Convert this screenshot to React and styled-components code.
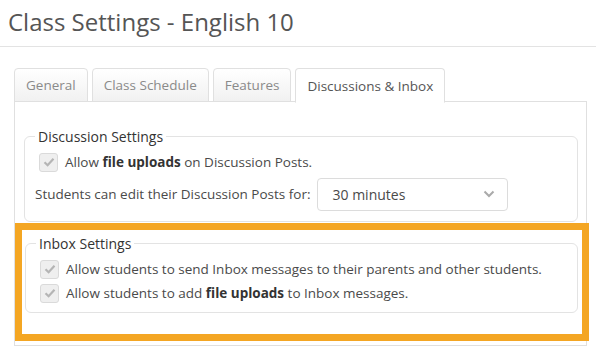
import React from 'react';
import styled, { createGlobalStyle } from 'styled-components';

const GlobalStyle = createGlobalStyle`
  body {
    margin: 0;
    background: #fff;
    font-family: "Open Sans", "Liberation Sans", sans-serif;
    color: #444;
  }
`;

// Page header with the class name
const Header = styled.div`
  height: 46px;
  padding: 0 8px;
  border-bottom: 1px solid #e3e3e3;
  display: flex;
  align-items: center;
`;

const Title = styled.h1`
  margin: 0 0 4px;
  font-size: 24px;
  font-weight: 400;
  color: #555;
`;

const Body = styled.div`
  padding: 21px 9px 0 14px;
`;

// Tab strip
const Tabs = styled.div`
  display: flex;
  gap: 4px;
  height: 34px;
  position: relative;
  z-index: 1;
`;

const Tab = styled.div`
  display: flex;
  align-items: center;
  padding: 0 11px;
  font-size: 13.5px;
  color: ${(p) => (p.active ? '#555' : '#8a8a8a')};
  border: 1px solid #e0e0e0;
  border-bottom: ${(p) => (p.active ? '1px solid #fff' : '1px solid #e0e0e0')};
  border-radius: 4px 4px 0 0;
  background: ${(p) => (p.active ? '#fff' : 'linear-gradient(#fff, #f1f1f1)')};
  height: ${(p) => (p.active ? '35px' : '34px')};
  box-sizing: border-box;
`;

// Tab content panel
const Panel = styled.div`
  margin-top: -1px;
  border: 1px solid #e0e0e0;
  padding: 25px 8px 4px 9px;
  width: 573px;
  box-sizing: border-box;
`;

const Fieldset = styled.fieldset`
  margin: 0;
  padding: 4px 10px 7px 10px;
  border: 1px solid #e3e3e3;
  border-radius: 6px;
  min-width: 0;
`;

const Legend = styled.legend`
  padding: 0 3px;
  font-size: 14px;
  color: #333;
`;

const Row = styled.label`
  display: flex;
  align-items: center;
  gap: 7px;
  height: ${(p) => p.h || 24}px;
  font-size: 13.5px;
  color: #4a4a4a;
  white-space: nowrap;

  b {
    font-weight: 700;
    color: #333;
  }
`;

const Box = styled.span`
  width: 19px;
  height: 19px;
  box-sizing: border-box;
  border: 1px solid #dadada;
  border-radius: 3px;
  background: #efefef;
  display: flex;
  align-items: center;
  justify-content: center;
  margin-left: 4px;
  flex-shrink: 0;
`;

const Select = styled.div`
  width: 191px;
  height: 33px;
  box-sizing: border-box;
  border: 1px solid #dcdcdc;
  border-radius: 4px;
  margin-left: -1px;
  display: flex;
  align-items: center;
  justify-content: space-between;
  padding: 0 12px 0 15px;
  font-size: 14px;
  color: #4a4a4a;
`;

// Orange annotation frame around the inbox settings
const Highlight = styled.div`
  margin: 1px -11px 0 -9px;
  border: 7px solid #f4a623;
  padding: 4px 4px 21px 3px;
`;

const Check = () => (
  <Box>
    <svg width="12" height="10" viewBox="0 0 12 10">
      <path d="M1.5 5.2 L4.6 8.2 L10.5 1.8" fill="none" stroke="#b5b5b5" strokeWidth="2.2" />
    </svg>
  </Box>
);

const Chevron = () => (
  <svg width="12" height="8" viewBox="0 0 12 8">
    <path d="M1.5 1.5 L6 6 L10.5 1.5" fill="none" stroke="#aaa" strokeWidth="2" />
  </svg>
);

const App = () => (
  <>
    <GlobalStyle />
    <Header>
      <Title>Class Settings - English 10</Title>
    </Header>
    <Body>
      <Tabs>
        <Tab>General</Tab>
        <Tab>Class Schedule</Tab>
        <Tab>Features</Tab>
        <Tab active>Discussions &amp; Inbox</Tab>
      </Tabs>
      <Panel>
        <Fieldset>
          <Legend>Discussion Settings</Legend>
          <Row h={24}>
            <Check />
            <span>Allow <b>file uploads</b> on Discussion Posts.</span>
          </Row>
          <Row h={40}>
            <span>Students can edit their Discussion Posts for:</span>
            <Select>
              <span>30 minutes</span>
              <Chevron />
            </Select>
          </Row>
        </Fieldset>
        <Highlight>
          <Fieldset>
            <Legend>Inbox Settings</Legend>
            <Row>
              <Check />
              <span>Allow students to send Inbox messages to their parents and other students.</span>
            </Row>
            <Row>
              <Check />
              <span>Allow students to add <b>file uploads</b> to Inbox messages.</span>
            </Row>
          </Fieldset>
        </Highlight>
      </Panel>
    </Body>
  </>
);

export default App;
